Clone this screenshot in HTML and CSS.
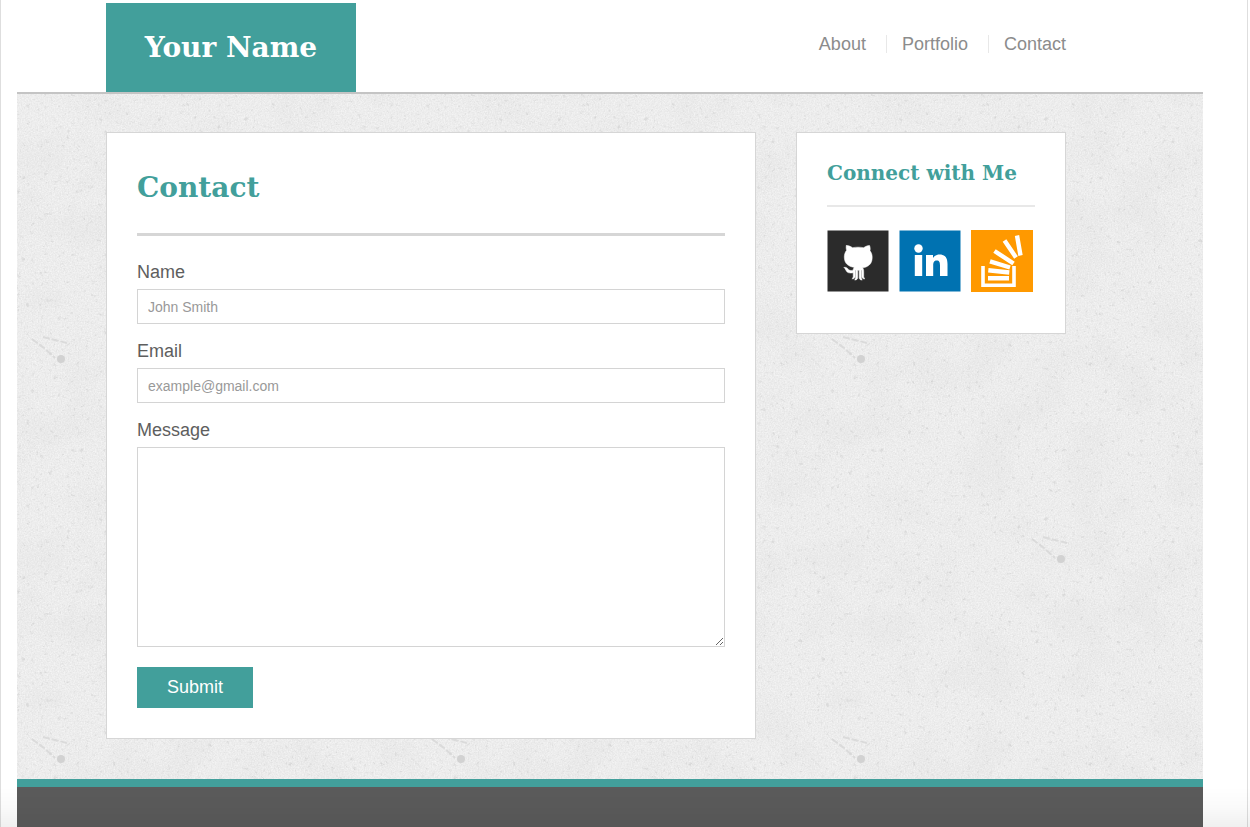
FILE: index.html
```html
<!DOCTYPE html>
<html lang="en">
<head>
<meta charset="utf-8">
<meta name="viewport" content="width=device-width, initial-scale=1">
<title>Your Name | Contact</title>
<link rel="stylesheet" href="styles.css">
</head>
<body>
<div class="page">
  <header class="header">
    <div class="container header-row">
      <h1 class="logo">Your Name</h1>
      <nav class="nav">
        <a href="#about">About</a>
        <a href="#portfolio">Portfolio</a>
        <a href="#contact">Contact</a>
      </nav>
    </div>
  </header>
  <main class="content">
    <div class="container columns">
      <section class="card main-card">
        <h2 class="title">Contact</h2>
        <form class="form">
          <label for="name">Name</label>
          <input id="name" type="text" placeholder="John Smith">
          <label for="email">Email</label>
          <input id="email" type="email" placeholder="example@gmail.com">
          <label for="message">Message</label>
          <textarea id="message"></textarea>
          <button class="submit" type="submit">Submit</button>
        </form>
      </section>
      <aside class="card side-card">
        <h3 class="side-title">Connect with Me</h3>
        <div class="social">
          <a href="#github" aria-label="GitHub">
            <svg viewBox="0 0 62 62"><path fill="#2b2b2b" d="M.5.500h61v61H.5z"/><path fill="#fff" stroke="#fff" stroke-width=".5" d="M19.600 15.500c2-.2 4.600 1.200 6 2.200 3.500-.7 7.500-.7 11 0 1.400-1 4-2.400 6-2.200.8 2 .7 4.200.4 5.200 1.600 2 2.200 4.200 2.200 6.800 0 7-4.500 9.600-9.700 10.300 1 1 1.200 2.200 1.200 4v5c0 1 .8 1.600 1.300 2-1.700.3-3.100-.5-3.100-2v-6.500h-.6v7.200c0 1 .4 1.800.9 2.600-1.800 0-3-1-3-2.400v-7.400h-1.500v7.400c0 1.400-1.200 2.400-3 2.400.5-.8.9-1.600.9-2.600v-7.200H28v6.500c0 1.500-1.400 2.300-3.100 2 .5-.4 1.300-1 1.300-2v-4c-4 .7-6-.2-7-2-.8-1.500-1.200-2.700-2.400-3.400 2.600-.5 3.700 1 4.700 2 1.200 1.200 2.600 1.300 4.600.8.1-1.300.5-2 1.200-2.800-5.200-.7-10-3.300-10-10.300 0-2.600.7-4.800 2.300-6.800-.4-1-.7-3.200-.2-5.200z"/></svg>
          </a>
          <a href="#linkedin" aria-label="LinkedIn">
            <svg viewBox="0 0 62 62"><path fill="#0072b1" d="M.5.500h61v61H.5z"/><g fill="#fff"><circle cx="19.500" cy="18.500" r="4.200"/><path d="M15.800 25h7.400v21h-7.400zM27 25h7v3c1.300-2.300 3.700-3.500 6.500-3.500 6 0 8 3.700 8 9.500v12H41V35.500c0-3-.6-5-3.200-5-2.800 0-3.600 2-3.600 5V46H27z"/></g></svg>
          </a>
          <a href="#stackoverflow" aria-label="Stack Overflow">
            <svg viewBox="0 0 62 62"><path fill="#f90" d="M0 0h62v62H0z"/><g fill="none" stroke="#fff"><path stroke-width="3.600" d="M12 36v19.200h31V36"/><path stroke-width="4.400" d="M17 48.300h21M17.300 40.300l21 2.200M19 31.300l20 6.200M23.500 21l19 12.500M33.500 10.500l11.500 17M46 5.500l3.500 20"/></g></svg>
          </a>
        </div>
      </aside>
    </div>
  </main>
  <footer class="footer"></footer>
</div>
</body>
</html>
```
FILE: styles.css
```css
* { box-sizing: border-box; }

body {
  margin: 0;
  background: #fff;
  color: #5e5e5e;
  font: 18px/26px "Liberation Sans", Arial, sans-serif;
}

.page {
  display: flex;
  flex-direction: column;
  min-height: 100vh;
  margin-right: 2px;
  padding: 3px 44px 0 16px;
  border-left: 1px solid #dedede;
  border-right: 1px solid #dedede;
}

/* soft shade along the bottom edge of the window */
.page::after {
  content: "";
  position: fixed;
  left: 0;
  right: 0;
  bottom: 0;
  height: 40px;
  background: linear-gradient(rgba(0, 0, 0, 0), rgba(0, 0, 0, .02) 50%, rgba(0, 0, 0, .06));
  pointer-events: none;
}

.container {
  max-width: 1049px;
  padding-left: 89px;
}

.header { border-bottom: 2px solid #c4c4c4; }

.header-row {
  display: flex;
  justify-content: space-between;
}

.logo, .title, .side-title {
  margin: 0;
  font-family: "DejaVu Serif", serif;
  font-weight: bold;
}

.logo {
  width: 250px;
  padding: 24px 0;
  background: #429f9b;
  color: #fff;
  font-size: 28px;
  line-height: 41px;
  text-align: center;
}

.nav {
  display: flex;
  align-items: flex-start;
  padding-top: 32px;
}

.nav a {
  padding: 0 20px 0 15px;
  border-right: 1px solid #e8e8e8;
  color: #8c8c8c;
  line-height: 18px;
  text-decoration: none;
}

.nav a:last-child {
  padding-right: 0;
  border-right: 0;
}

/* speckled plaster: fine grain, faint blotches, dark flecks and a scratch mark */
.content {
  padding: 38px 0 40px;
  background: #ececec url("data:image/svg+xml,%3Csvg xmlns='http://www.w3.org/2000/svg' width='400' height='400'%3E%3Cfilter id='f' x='0' y='0' width='100%25' height='100%25' color-interpolation-filters='sRGB'%3E%3CfeTurbulence type='fractalNoise' baseFrequency='.7' numOctaves='2' seed='4' stitchTiles='stitch'/%3E%3CfeColorMatrix values='.1 0 0 0 .878 .1 0 0 0 .878 .1 0 0 0 .878 0 0 0 0 1'/%3E%3C/filter%3E%3Cfilter id='g' x='0' y='0' width='100%25' height='100%25' color-interpolation-filters='sRGB'%3E%3CfeTurbulence type='fractalNoise' baseFrequency='.02' numOctaves='5' seed='9' stitchTiles='stitch'/%3E%3CfeColorMatrix values='0 0 0 0 .5 0 0 0 0 .5 0 0 0 0 .5 .5 0 0 0 -.23'/%3E%3C/filter%3E%3Cfilter id='h' x='0' y='0' width='100%25' height='100%25' color-interpolation-filters='sRGB'%3E%3CfeTurbulence type='fractalNoise' baseFrequency='.22' numOctaves='4' seed='21' stitchTiles='stitch'/%3E%3CfeColorMatrix values='0 0 0 0 .5 0 0 0 0 .5 0 0 0 0 .5 5 0 0 0 -3.25'/%3E%3C/filter%3E%3Crect width='400' height='400' filter='url(%23f)'/%3E%3Crect width='400' height='400' filter='url(%23g)' opacity='.2'/%3E%3Crect width='400' height='400' filter='url(%23h)' opacity='.16'/%3E%3Cg id='m' fill='%23d2d2d2' stroke='%23d4d4d4'%3E%3Ccircle cx='44' cy='265' r='4' stroke='none'/%3E%3Cpath d='M15 245l12 9 11 10M26 243l12 3 12 3' fill='none' stroke-width='2' stroke-dasharray='7 2' opacity='.7'/%3E%3C/g%3E%3Cuse href='%23m' x='200' y='-200'/%3E%3C/svg%3E");
  background-size: 400px 400px;
}

.columns {
  display: flex;
  align-items: flex-start;
  gap: 40px;
}

.card {
  padding: 30px;
  border: 1px solid #d6d6d6;
  background: #fff;
}

.main-card { flex: 1; }

.side-card {
  width: 270px;
  padding: 24px 30px 41px;
}

.title {
  margin-bottom: 23px;
  padding-bottom: 20px;
  border-bottom: 3px solid #d6d6d6;
  color: #429f9b;
  font-size: 28px;
  line-height: 50px;
}

.side-title {
  margin-bottom: 23px;
  padding-bottom: 16px;
  border-bottom: 2px solid #e8e8e8;
  color: #429f9b;
  font-size: 20px;
  line-height: 32px;
  white-space: nowrap;
}

.form {
  display: flex;
  flex-direction: column;
}

.form label {
  margin-bottom: 4px;
}

.form input, .form textarea {
  width: 100%;
  margin: 0 0 14px;
  padding: 8px 10px;
  border: 1px solid #d4d4d4;
  border-radius: 0;
  background: #fff;
  color: #555;
  font: 14px/17px "Liberation Sans", Arial, sans-serif;
}

.form input { height: 35px; }

.form textarea {
  height: 200px;
  margin-bottom: 20px;
}

.form ::placeholder { color: #999; }

.submit {
  align-self: flex-start;
  padding: 10px 30px;
  border: 0;
  background: #429f9b;
  color: #fff;
  font: 18px/21px "Liberation Sans", Arial, sans-serif;
}

.social {
  display: flex;
  gap: 10px;
}

.social a, .social svg {
  display: block;
  width: 62px;
  height: 62px;
}

.footer {
  flex: 1;
  min-height: 48px;
  border-top: 8px solid #429f9b;
  background: #5b5b5b;
}
```
